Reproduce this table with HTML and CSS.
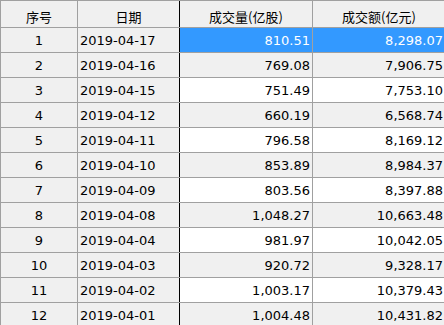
FILE: index.html
```html
<!DOCTYPE html>
<html>
<head>
<meta charset="utf-8">
<link rel="stylesheet" href="styles.css">
</head>
<body>
<div class="grid">
  <div class="row head">
    <div class="cell c1">序号</div>
    <div class="cell c2">日期</div>
    <div class="cell c3">成交量(亿股)</div>
    <div class="cell c4">成交额(亿元)</div>
  </div>
  <div class="row sel">
    <div class="cell c1">1</div><div class="cell c2">2019-04-17</div><div class="cell c3">810.51</div><div class="cell c4">8,298.07</div>
  </div>
  <div class="row even">
    <div class="cell c1">2</div><div class="cell c2">2019-04-16</div><div class="cell c3">769.08</div><div class="cell c4">7,906.75</div>
  </div>
  <div class="row">
    <div class="cell c1">3</div><div class="cell c2">2019-04-15</div><div class="cell c3">751.49</div><div class="cell c4">7,753.10</div>
  </div>
  <div class="row even">
    <div class="cell c1">4</div><div class="cell c2">2019-04-12</div><div class="cell c3">660.19</div><div class="cell c4">6,568.74</div>
  </div>
  <div class="row">
    <div class="cell c1">5</div><div class="cell c2">2019-04-11</div><div class="cell c3">796.58</div><div class="cell c4">8,169.12</div>
  </div>
  <div class="row even">
    <div class="cell c1">6</div><div class="cell c2">2019-04-10</div><div class="cell c3">853.89</div><div class="cell c4">8,984.37</div>
  </div>
  <div class="row">
    <div class="cell c1">7</div><div class="cell c2">2019-04-09</div><div class="cell c3">803.56</div><div class="cell c4">8,397.88</div>
  </div>
  <div class="row even">
    <div class="cell c1">8</div><div class="cell c2">2019-04-08</div><div class="cell c3">1,048.27</div><div class="cell c4">10,663.48</div>
  </div>
  <div class="row">
    <div class="cell c1">9</div><div class="cell c2">2019-04-04</div><div class="cell c3">981.97</div><div class="cell c4">10,042.05</div>
  </div>
  <div class="row even">
    <div class="cell c1">10</div><div class="cell c2">2019-04-03</div><div class="cell c3">920.72</div><div class="cell c4">9,328.17</div>
  </div>
  <div class="row">
    <div class="cell c1">11</div><div class="cell c2">2019-04-02</div><div class="cell c3">1,003.17</div><div class="cell c4">10,379.43</div>
  </div>
  <div class="row even">
    <div class="cell c1">12</div><div class="cell c2">2019-04-01</div><div class="cell c3">1,004.48</div><div class="cell c4">10,431.82</div>
  </div>
</div>
</body>
</html>
```

FILE: styles.css
```css
html, body {
  margin: 0;
  padding: 0;
  background: #ffffff;
  overflow: hidden;
  width: 444px;
  height: 325px;
}
.grid {
  width: 446px;
  border-left: 1px solid #a0a0a0;
  border-top: 1px solid #a0a0a0;
  box-sizing: border-box;
  font-family: "DejaVu Sans", "Noto Sans CJK SC", sans-serif;
  font-size: 13px;
  color: #000;
}
.row {
  display: grid;
  grid-template-columns: 77px 102px 133px 133px;
  height: 25px;
  box-sizing: border-box;
  border-bottom: 1px solid #a0a0a0;
}
.row.head {
  height: 27px;
}
.cell {
  box-sizing: border-box;
  border-right: 1px solid #a0a0a0;
  display: flex;
  align-items: center;
  white-space: nowrap;
  overflow: hidden;
  background: #ffffff;
}
.c1 {
  justify-content: center;
  background: #f0f0f0;
}
.c2 {
  background: #f0f0f0;
  padding-left: 2px;
  border-right-color: #000000;
}
.c3, .c4 {
  justify-content: flex-end;
  padding-right: 2px;
}
.row.even .c3, .row.even .c4 {
  background: #f0f0f0;
}
.row.sel .c3, .row.sel .c4 {
  background: #3399ff;
  color: #ffffff;
}
.head .cell {
  background: #f0f0f0;
  justify-content: center;
  padding: 5px 0 0 0;
  font-family: "Noto Sans CJK SC", sans-serif;
}
```
